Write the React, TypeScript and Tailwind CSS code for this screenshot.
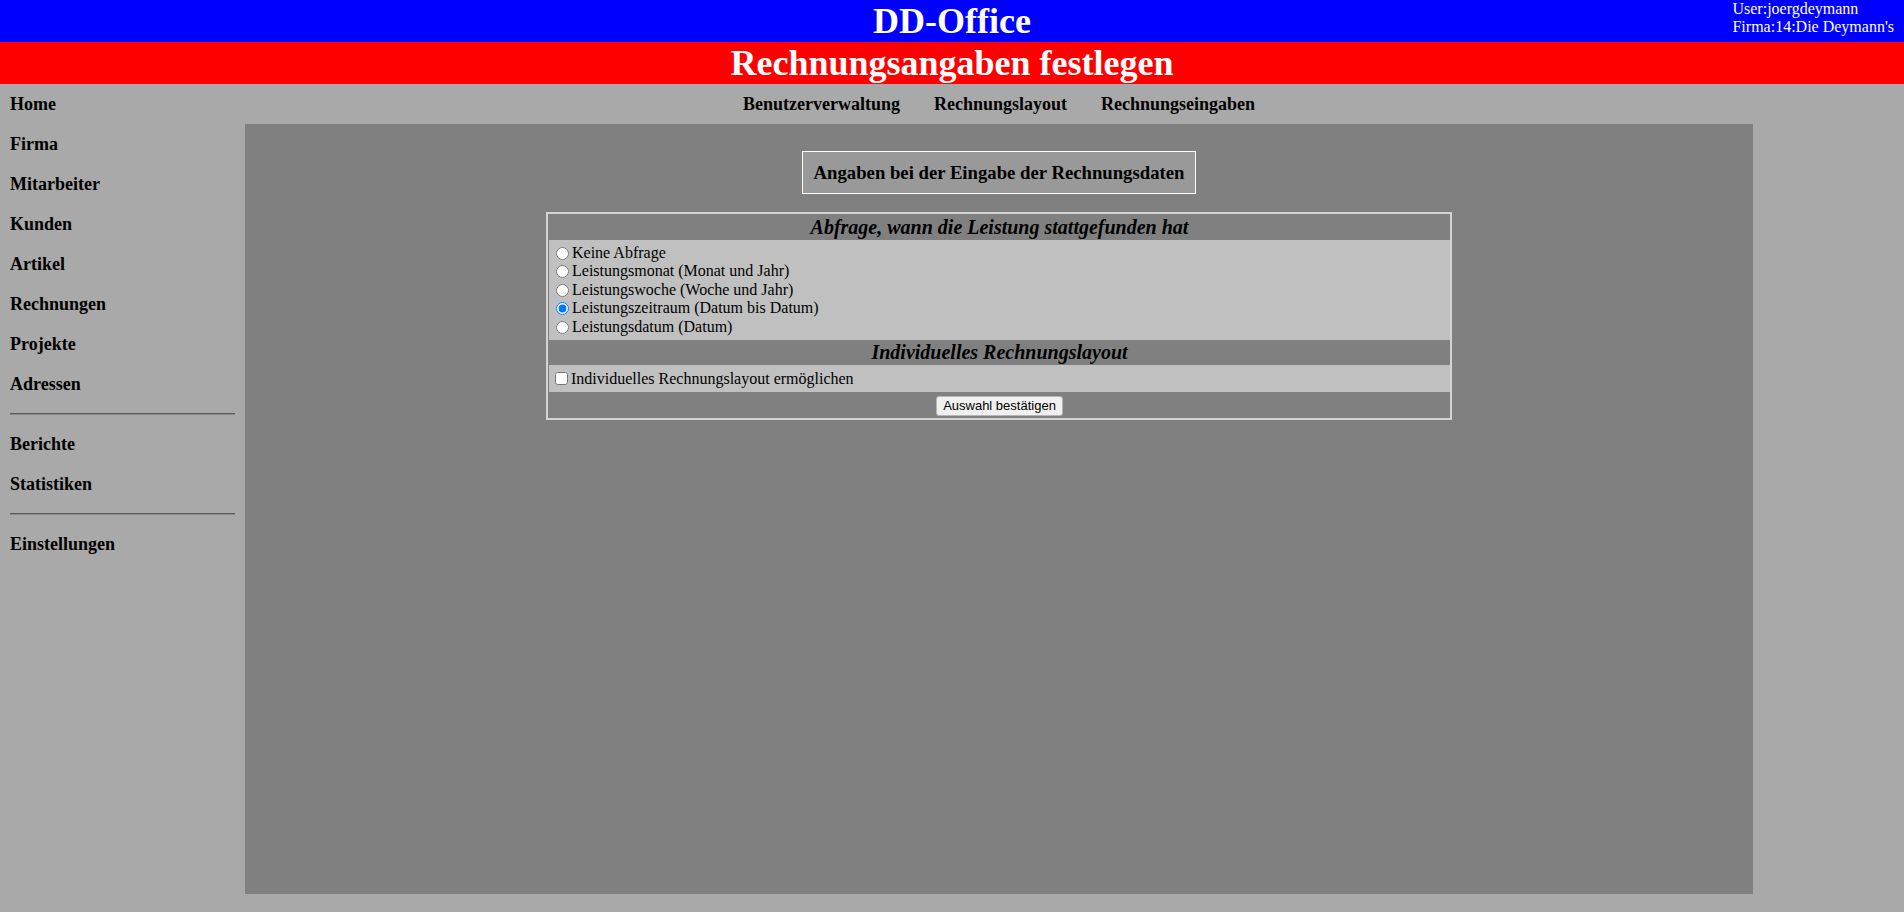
import React from "react";

const leftNav1 = ["Home", "Firma", "Mitarbeiter", "Kunden", "Artikel", "Rechnungen", "Projekte", "Adressen"];
const leftNav2 = ["Berichte", "Statistiken"];
const leftNav3 = ["Einstellungen"];

const radios = [
  "Keine Abfrage",
  "Leistungsmonat (Monat und Jahr)",
  "Leistungswoche (Woche und Jahr)",
  "Leistungszeitraum (Datum bis Datum)",
  "Leistungsdatum (Datum)",
];

function NavItem({ label }: { label: string }) {
  return (
    <div className="h-[40px] pl-[10px] text-[18px] font-bold leading-[40px] text-black">{label}</div>
  );
}

function Sep() {
  return <div className="mx-[10px] my-[9px] h-[2px] border-t border-[#5a5a5a] border-b-[1px] border-b-[#8a8a8a]" />;
}

export default function App() {
  return (
    <div className="min-h-screen w-full bg-[#a9a9a9] font-['Liberation_Serif','Times_New_Roman',serif] text-black">
      {/* Blue header */}
      <div className="relative h-[42px] bg-[#0000ff] text-center">
        <h1 className="text-[36px] font-bold leading-[42px] text-white">DD-Office</h1>
        <div className="absolute right-[10px] top-0 text-left text-[16px] leading-[18px] text-white">
          <div>User:joergdeymann</div>
          <div>Firma:14:Die Deymann's</div>
        </div>
      </div>
      {/* Red title */}
      <div className="h-[42px] bg-[#ff0000] text-center">
        <h2 className="text-[36px] font-bold leading-[42px] text-white">Rechnungsangaben festlegen</h2>
      </div>

      <div className="flex">
        {/* Left navigation */}
        <div className="w-[245px] shrink-0">
          {leftNav1.map((l) => (
            <NavItem key={l} label={l} />
          ))}
          <Sep />
          {leftNav2.map((l) => (
            <NavItem key={l} label={l} />
          ))}
          <Sep />
          {leftNav3.map((l) => (
            <NavItem key={l} label={l} />
          ))}
        </div>

        {/* Main column */}
        <div className="flex w-[1508px] shrink-0 flex-col">
          <div className="flex h-[40px] justify-center gap-[34px] text-[18px] font-bold leading-[40px]">
            <span>Benutzerverwaltung</span>
            <span>Rechnungslayout</span>
            <span>Rechnungseingaben</span>
          </div>
          <div className="flex h-[770px] flex-col items-center bg-[#808080] pt-[27px]">
            <div className="border border-white bg-[#999999] px-[11px] py-[10px]">
              <h3 className="text-[18.72px] font-bold leading-[21px]">Angaben bei der Eingabe der Rechnungsdaten</h3>
            </div>

            <div className="mt-[18px] w-[906px] border-2 border-[#d4d4d4] bg-[#808080] py-px pl-px">
              <div className="h-[25px] bg-[#808080] text-center text-[20px] font-bold italic leading-[25px]">
                Abfrage, wann die Leistung stattgefunden hat
              </div>
              <div className="flex h-[100px] flex-col justify-center bg-[#c0c0c0] pl-[2px] text-[16px]">
                {radios.map((r, i) => (
                  <label key={r} className="flex h-[18.5px] items-center leading-[18.5px]">
                    <input
                      type="radio"
                      name="leistung"
                      defaultChecked={i === 3}
                      className="m-0 ml-[5px] mr-[3px] h-[13px] w-[13px]"
                    />
                    <span>{r}</span>
                  </label>
                ))}
              </div>
              <div className="h-[25px] bg-[#808080] text-center text-[20px] font-bold italic leading-[25px]">
                Individuelles Rechnungslayout
              </div>
              <div className="flex h-[27px] items-center bg-[#c0c0c0] pl-[2px] text-[16px]">
                <input type="checkbox" className="m-0 ml-[4px] mr-[3px] h-[13px] w-[13px]" />
                <span>Individuelles Rechnungslayout ermöglichen</span>
              </div>
              <div className="flex h-[25px] justify-center bg-[#808080] pt-[4px]">
                <button className="h-[20px] rounded-[3px] border border-[#b5b5b5] bg-[#f0f0f0] px-[6px] font-['Liberation_Sans',Arial,sans-serif] text-[13px] leading-[16px] text-black">
                  Auswahl bestätigen
                </button>
              </div>
            </div>
          </div>
          <div className="h-[18px]" />
        </div>
      </div>
    </div>
  );
}
